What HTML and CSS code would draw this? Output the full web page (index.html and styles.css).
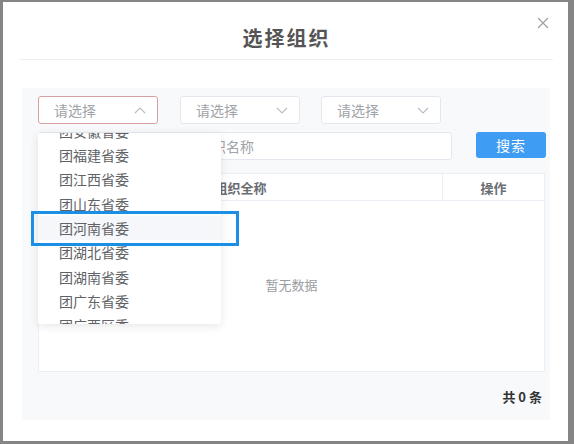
FILE: index.html
```html
<!DOCTYPE html>
<html lang="zh-CN">
<head>
<meta charset="utf-8">
<link rel="stylesheet" href="styles.css">
</head>
<body>
<div class="dialog">
  <div class="header">
    <div class="title">选择组织</div>
    <span class="close">
      <svg width="12" height="12" viewBox="0 0 12 12"><path d="M1 1L11 11M11 1L1 11" stroke="#a0a0a0" stroke-width="1.2" fill="none"/></svg>
    </span>
  </div>
  <div class="divider"></div>
  <div class="panel">
    <div class="row selects">
      <div class="select active">
        <span class="ph">请选择</span>
        <svg class="arrow" width="12" height="7" viewBox="0 0 12 7"><path d="M1 6L6 1L11 6" stroke="#b8bcc4" stroke-width="1.1" fill="none"/></svg>
      </div>
      <div class="select">
        <span class="ph">请选择</span>
        <svg class="arrow" width="12" height="7" viewBox="0 0 12 7"><path d="M1 1L6 6L11 1" stroke="#b8bcc4" stroke-width="1.1" fill="none"/></svg>
      </div>
      <div class="select">
        <span class="ph">请选择</span>
        <svg class="arrow" width="12" height="7" viewBox="0 0 12 7"><path d="M1 1L6 6L11 1" stroke="#b8bcc4" stroke-width="1.1" fill="none"/></svg>
      </div>
    </div>
    <div class="row search">
      <div class="input"><span class="ph">请输入需要搜索查询的组织名称</span></div>
      <div class="btn">搜索</div>
    </div>
    <div class="table">
      <div class="thead">
        <div class="th name">组织全称</div>
        <div class="th op">操作</div>
      </div>
      <div class="tbody">暂无数据</div>
    </div>
    <div class="footer">共 0 条</div>

    <div class="dropdown">
      <ul class="list">
        <li>团安徽省委</li>
        <li>团福建省委</li>
        <li>团江西省委</li>
        <li>团山东省委</li>
        <li class="hover">团河南省委</li>
        <li>团湖北省委</li>
        <li>团湖南省委</li>
        <li>团广东省委</li>
        <li>团广西区委</li>
      </ul>
    </div>
    <div class="mark"></div>
  </div>
</div>
</body>
</html>
```

FILE: styles.css
```css
* { box-sizing: border-box; }
html, body { margin: 0; padding: 0; }
body {
  width: 574px;
  height: 444px;
  background: #858585;
  font-family: "Noto Sans CJK SC", "Noto Sans", sans-serif;
  overflow: hidden;
}
.dialog {
  margin: 2px 0 0 3px;
  width: 565px;
  height: 439px;
  background: #ffffff;
  display: flex;
  flex-direction: column;
}
.header {
  position: relative;
  height: 57px;
  display: flex;
  align-items: flex-start;
  justify-content: center;
  padding-top: 23px;
}
.title {
  font-size: 20px;
  line-height: 26px;
  font-weight: 700;
  color: #555555;
  letter-spacing: 2px;
  margin-left: 2px;
}
.close {
  position: absolute;
  right: 19px;
  top: 15px;
  display: flex;
}
.divider {
  height: 1px;
  background: #efefef;
  margin: 0 15px 0 17px;
}
.panel {
  position: relative;
  margin: 28px 18px 0 19px;
  height: 332px;
  background: #f8f9fb;
  padding: 8px 4px 0 16px;
  display: flex;
  flex-direction: column;
}
.row { display: flex; }
.selects { gap: 22px; height: 28px; }
.select {
  width: 120px;
  height: 28px;
  border: 1px solid #e4e7ed;
  border-radius: 3px;
  background: #fff;
  display: flex;
  align-items: center;
  justify-content: space-between;
  padding: 0 11px 0 15px;
}
.select.active { border-color: #d9a0a3; }
.select + .select + .select { margin-left: -1px; }
.ph {
  font-size: 14px;
  color: #a0a3a8;
  line-height: 20px;
  white-space: nowrap;
}
.search { margin-top: 8px; height: 28px; align-items: flex-start; }
.input {
  width: 414px;
  height: 28px;
  border: 1px solid #e4e7ed;
  border-radius: 3px;
  background: #fff;
  display: flex;
  align-items: center;
  padding-left: 19px;
  overflow: hidden;
}
.btn {
  margin-left: 24px;
  width: 70px;
  height: 26px;
  background: #3e9cf3;
  border-radius: 3px;
  color: #fff;
  font-size: 14px;
  display: flex;
  align-items: center;
  justify-content: center;
  letter-spacing: 1px;
}
.table {
  margin-top: 13px;
  margin-right: 1px;
  height: 199px;
  background: #fff;
  border: 1px solid #ebeef5;
  display: flex;
  flex-direction: column;
}
.thead {
  height: 27px;
  display: flex;
  border-bottom: 1px solid #ebeef5;
}
.th {
  font-size: 13px;
  font-weight: 700;
  color: #6a6d72;
  display: flex;
  align-items: center;
  justify-content: center;
}
.th.name { width: 404px; border-right: 1px solid #ebeef5; }
.th.op { flex: 1; }
.tbody {
  flex: 1;
  display: flex;
  align-items: center;
  justify-content: center;
  font-size: 13px;
  color: #9a9da2;
  padding-bottom: 4px;
}
.footer {
  margin-top: 17px;
  text-align: right;
  padding-right: 4px;
  font-size: 13px;
  font-weight: 700;
  color: #333;
  line-height: 16px;
}
.dropdown {
  position: absolute;
  left: 16px;
  top: 45px;
  width: 183px;
  height: 191px;
  background: #fff;
  box-shadow: 0 2px 10px rgba(0,0,0,0.10);
  border-radius: 2px;
  overflow: hidden;
}
.list {
  list-style: none;
  margin: -14.5px 0 0 0;
  padding: 0;
}
.list li {
  height: 24.35px;
  line-height: 24.35px;
  padding-left: 21px;
  font-size: 14px;
  color: #606266;
}
.list li.hover { background: #f5f7fa; }
.mark {
  position: absolute;
  left: 9px;
  top: 123px;
  width: 208px;
  height: 35px;
  border: 3px solid #1b8fe6;
}
```
